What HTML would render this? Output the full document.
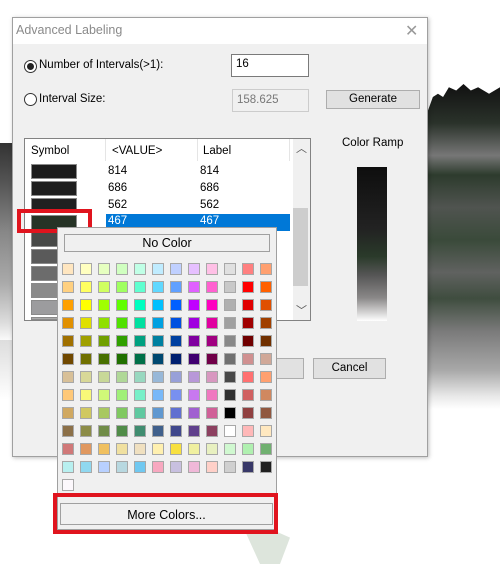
<!DOCTYPE html>
<html><head><meta charset="utf-8"><style>
*{box-sizing:border-box;margin:0;padding:0}
body{width:500px;height:564px;position:relative;overflow:hidden;background:#fff;font-family:"Liberation Sans",sans-serif;font-size:11.5px;color:#000}
.a{position:absolute}
.mtn{background:linear-gradient(180deg,#111 0%,#2a322a 12%,#777 22%,#2d3b2d 28%,#505450 38%,#3a4a3a 48%,#606260 58%,#3f4d3f 66%,#7a7a7a 76%,#a8a8a8 88%,#e8e8e8 96%,#fff 100%)}
.btn{background:#e1e1e1;border:1px solid #adadad;text-align:center}
.sw{position:absolute;left:31px;width:46px;height:15px;border:1px solid #8a8a8a}
.grid{position:absolute;left:62px;top:263px;display:grid;grid-template-columns:repeat(12,12px);grid-auto-rows:12px;gap:6px}
.grid i{display:block;border:1px solid #a8a8a8}
</style></head><body>
<div class="a mtn" style="left:427px;top:84px;width:73px;height:325px;clip-path:polygon(0 9%,8% 4%,15% 3%,22% 4%,30% 1%,40% 2%,50% 0,60% 2%,70% 1%,85% 3%,100% 1%,100% 100%,0 100%)"></div>
<div class="a" style="left:0;top:143px;width:12px;height:200px;background:linear-gradient(#333 0%,#555 20%,#888 45%,#aaa 70%,#ddd 90%,#fff 100%)"></div>
<div class="a" style="left:0;top:340px;width:14px;height:60px;background:linear-gradient(#ddd,#fff)"></div>
<div class="a" style="left:240px;top:520px;width:50px;height:44px;background:#dde5dc;clip-path:polygon(0 0,60% 20%,100% 40%,80% 100%,40% 100%)"></div>

<div class="a" style="left:12px;top:17px;width:416px;height:440px;background:#f0f0f0;border:1px solid #a0a0a0;box-shadow:1px 1px 4px rgba(0,0,0,.25)">
 <div class="a" style="left:0;top:0;width:414px;height:26px;background:#fff;color:#8a8a8a;font-size:12.5px;padding:5px 3px">Advanced Labeling</div>
 <div class="a" style="left:392px;top:3px;font-size:16px;color:#999">✕</div>
</div>

<div class="a" style="left:24px;top:60px;width:13px;height:13px;border:1px solid #333;border-radius:50%;background:#fff"><div class="a" style="left:2px;top:2px;width:7px;height:7px;border-radius:50%;background:#222"></div></div>
<div class="a" style="left:39px;top:59px">Number of Intervals(&gt;1):</div>
<div class="a" style="left:231px;top:54px;width:78px;height:23px;background:#fff;border:1px solid #7a7a7a;padding:3px 4px">16</div>
<div class="a" style="left:24px;top:93px;width:13px;height:13px;border:1px solid #333;border-radius:50%;background:#fff"></div>
<div class="a" style="left:39px;top:93px">Interval Size:</div>
<div class="a" style="left:232px;top:89px;width:77px;height:23px;background:#f0f0f0;border:1px solid #ccc;padding:4px 4px;color:#777">158.625</div>
<div class="a btn" style="left:326px;top:90px;width:94px;height:19px;padding-top:2px">Generate</div>

<div class="a" style="left:24px;top:138px;width:287px;height:183px;background:#fff;border:1px solid #828282"></div>
<div class="a" style="left:31px;top:145px">Symbol</div>
<div class="a" style="left:105px;top:139px;width:1px;height:22px;background:#e5e5e5"></div>
<div class="a" style="left:112px;top:145px">&lt;VALUE&gt;</div>
<div class="a" style="left:197px;top:139px;width:1px;height:22px;background:#e5e5e5"></div>
<div class="a" style="left:203px;top:145px">Label</div>
<div class="a" style="left:289px;top:139px;width:1px;height:22px;background:#e5e5e5"></div>
<div class="a" style="left:293px;top:139px;width:17px;height:181px;background:#f0f0f0"></div>
<div class="a" style="left:296px;top:140px;color:#555;font-size:11px">︿</div>
<div class="a" style="left:296px;top:302px;color:#555;font-size:11px">﹀</div>
<div class="a" style="left:293px;top:208px;width:15px;height:78px;background:#cdcdcd"></div>
<div class="a" style="left:108px;top:165px">814</div><div class="a" style="left:200px;top:165px">814</div>
<div class="a" style="left:108px;top:182px">686</div><div class="a" style="left:200px;top:182px">686</div>
<div class="a" style="left:108px;top:199px">562</div><div class="a" style="left:200px;top:199px">562</div>
<div class="a" style="left:106px;top:214px;width:184px;height:17px;background:#0078d7;color:#fff;padding:1px 2px">467<span style="position:absolute;left:94px">467</span></div>
<div class="sw" style="top:164px;background:#1b1b1b"></div>
<div class="sw" style="top:181px;background:#1e1e1e"></div>
<div class="sw" style="top:198px;background:#202020"></div>
<div class="sw" style="top:215px;background:#263326"></div>
<div class="sw" style="top:232px;background:#484a48"></div>
<div class="sw" style="top:249px;background:#5a5a5a"></div>
<div class="sw" style="top:266px;background:#6c6c6c"></div>
<div class="sw" style="top:283px;background:#8a8a8a"></div>
<div class="sw" style="top:300px;background:#9c9c9e"></div>
<div class="sw" style="top:317px;height:3px;background:#aaa"></div>
<div class="a" style="left:17px;top:209px;width:75px;height:24px;border:4px solid #e0141e"></div>

<div class="a" style="left:342px;top:137px">Color Ramp</div>
<div class="a" style="left:357px;top:167px;width:30px;height:154px;background:linear-gradient(#0e0e0e 0%,#222 40%,#2a3a2a 58%,#555 70%,#8a8888 85%,#fff 100%)"></div>
<div class="a btn" style="left:250px;top:358px;width:54px;height:21px"></div>
<div class="a btn" style="left:313px;top:358px;width:73px;height:21px;padding-top:3px">Cancel</div>

<div class="a" style="left:57px;top:227px;width:220px;height:303px;background:#f0f0f0;border:1px solid #a0a0a0"></div>
<div class="a btn" style="left:64px;top:234px;width:206px;height:18px;border-color:#a0a0a0;background:#f0f0f0;font-size:12.5px;padding-top:1px">No Color</div>
<div class="grid">
<i style="background:#ffe6c0"></i><i style="background:#ffffc0"></i><i style="background:#e6ffc0"></i><i style="background:#d0ffc0"></i><i style="background:#c0ffe6"></i><i style="background:#c0ecff"></i><i style="background:#c0d0ff"></i><i style="background:#e6c0ff"></i><i style="background:#ffc0e6"></i><i style="background:#e0e0e0"></i><i style="background:#ff8080"></i><i style="background:#ffa070"></i>
<i style="background:#ffd080"></i><i style="background:#ffff60"></i><i style="background:#d0ff60"></i><i style="background:#a0ff60"></i><i style="background:#60ffd0"></i><i style="background:#60d8ff"></i><i style="background:#60a0ff"></i><i style="background:#e060ff"></i><i style="background:#ff60d0"></i><i style="background:#c8c8c8"></i><i style="background:#ff0000"></i><i style="background:#ff6000"></i>
<i style="background:#ffa000"></i><i style="background:#ffff00"></i><i style="background:#a0ff00"></i><i style="background:#60ff00"></i><i style="background:#00ffc0"></i><i style="background:#00c0ff"></i><i style="background:#0060ff"></i><i style="background:#c000ff"></i><i style="background:#ff00c0"></i><i style="background:#b0b0b0"></i><i style="background:#e00000"></i><i style="background:#e05000"></i>
<i style="background:#e09000"></i><i style="background:#e0e000"></i><i style="background:#90e000"></i><i style="background:#50e000"></i><i style="background:#00e0a0"></i><i style="background:#00a0e0"></i><i style="background:#0050e0"></i><i style="background:#a000e0"></i><i style="background:#e000a0"></i><i style="background:#a0a0a0"></i><i style="background:#a00000"></i><i style="background:#a04000"></i>
<i style="background:#a07000"></i><i style="background:#a0a000"></i><i style="background:#70a000"></i><i style="background:#30a000"></i><i style="background:#00a080"></i><i style="background:#0080a0"></i><i style="background:#0040a0"></i><i style="background:#8000a0"></i><i style="background:#a00080"></i><i style="background:#888888"></i><i style="background:#700000"></i><i style="background:#703000"></i>
<i style="background:#704800"></i><i style="background:#707000"></i><i style="background:#487000"></i><i style="background:#207000"></i><i style="background:#007048"></i><i style="background:#004870"></i><i style="background:#002070"></i><i style="background:#400070"></i><i style="background:#700048"></i><i style="background:#707070"></i><i style="background:#d09090"></i><i style="background:#d0a898"></i>
<i style="background:#d8c098"></i><i style="background:#d8d898"></i><i style="background:#c8d898"></i><i style="background:#b0d898"></i><i style="background:#98d8c0"></i><i style="background:#98b8d8"></i><i style="background:#98a0d8"></i><i style="background:#b898d8"></i><i style="background:#d898c0"></i><i style="background:#484848"></i><i style="background:#ff7070"></i><i style="background:#ffa070"></i>
<i style="background:#ffc878"></i><i style="background:#f8f878"></i><i style="background:#d0f878"></i><i style="background:#a0f078"></i><i style="background:#78f0c8"></i><i style="background:#78b8f8"></i><i style="background:#7890f0"></i><i style="background:#c878f0"></i><i style="background:#f078c0"></i><i style="background:#303030"></i><i style="background:#d06060"></i><i style="background:#d08860"></i>
<i style="background:#d0a860"></i><i style="background:#d0c860"></i><i style="background:#a8c860"></i><i style="background:#80c860"></i><i style="background:#60c8a0"></i><i style="background:#6098d0"></i><i style="background:#6070d0"></i><i style="background:#a060d0"></i><i style="background:#d06098"></i><i style="background:#000000"></i><i style="background:#904040"></i><i style="background:#905840"></i>
<i style="background:#8c7048"></i><i style="background:#8c8c48"></i><i style="background:#708c48"></i><i style="background:#508c48"></i><i style="background:#408c70"></i><i style="background:#40608c"></i><i style="background:#40488c"></i><i style="background:#60408c"></i><i style="background:#8c4060"></i><i style="background:#ffffff"></i><i style="background:#ffb8b8"></i><i style="background:#ffe8c0"></i>
<i style="background:#d07878"></i><i style="background:#e09860"></i><i style="background:#f0c060"></i><i style="background:#f0e0a0"></i><i style="background:#f0e0c0"></i><i style="background:#fff0b0"></i><i style="background:#f8e040"></i><i style="background:#f0f0a0"></i><i style="background:#e8f0c0"></i><i style="background:#d0f8d0"></i><i style="background:#b0f0b0"></i><i style="background:#70b070"></i>
<i style="background:#b8f0f0"></i><i style="background:#90d8f0"></i><i style="background:#b8d0ff"></i><i style="background:#b8d8e0"></i><i style="background:#70c8f0"></i><i style="background:#f8a8c0"></i><i style="background:#c8c0e0"></i><i style="background:#f0b8d8"></i><i style="background:#ffd0c8"></i><i style="background:#d0d0d0"></i><i style="background:#383868"></i><i style="background:#202020"></i>
<i style="background:#fcf8fc"></i>
</div>
<div class="a btn" style="left:60px;top:503px;width:213px;height:22px;border-color:#a0a0a0;background:#f0f0f0;font-size:12.5px;padding-top:4px">More Colors...</div>
<div class="a" style="left:53px;top:493px;width:225px;height:41px;border:4px solid #e0141e"></div>
</body></html>
